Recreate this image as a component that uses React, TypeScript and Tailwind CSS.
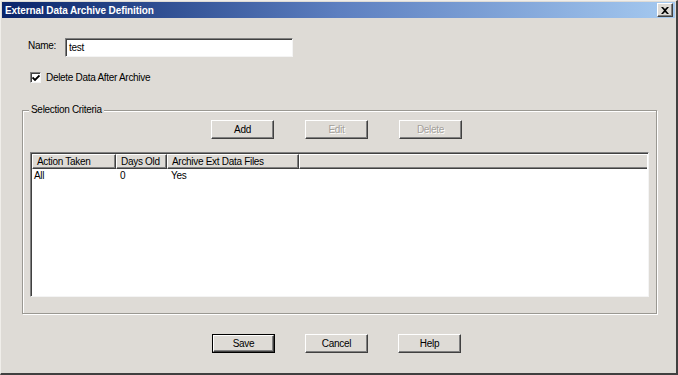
import React from 'react';

const font = "font-['Liberation_Sans',Arial,sans-serif]";

interface BtnProps {
  label: string;
  disabled?: boolean;
  isDefault?: boolean;
}

const Btn: React.FC<BtnProps> = ({ label, disabled, isDefault }) => {
  if (isDefault) {
    return (
      <div className="w-[63px] h-[19px] border border-black">
        <div className="w-full h-full flex items-center justify-center border-t border-l border-white border-r border-b border-r-[#404040] border-b-[#404040] shadow-[inset_-1px_-1px_0_#808080] text-[10px] tracking-[-0.3px] text-black">
          {label}
        </div>
      </div>
    );
  }
  return (
    <div
      className={`w-[63px] h-[19px] flex items-center justify-center border-t border-l border-white border-r border-b border-r-[#404040] border-b-[#404040] shadow-[inset_-1px_-1px_0_#808080] text-[10px] tracking-[-0.3px] ${
        disabled ? 'text-[#a3a09a] [text-shadow:1px_1px_0_#fff]' : 'text-black'
      }`}
    >
      {label}
    </div>
  );
};

const HeaderCell: React.FC<{ label: string; width: string }> = ({ label, width }) => (
  <div
    className={`${width} h-full flex items-center pl-[4px] border-t border-l border-white border-r border-b border-r-[#404040] border-b-[#404040] shadow-[inset_-1px_-1px_0_#808080]`}
  >
    {label}
  </div>
);

const App: React.FC = () => {
  return (
    <div className={`${font} w-[678px] h-[375px] bg-[#dedbd6] border-l border-t border-l-[#f0eeea] border-t-[#f0eeea] border-r-2 border-b-2 border-r-[#404040] border-b-[#404040] flex flex-col text-black`}>
      {/* title bar */}
      <div className="mx-[1px] mt-[1px] h-[16px] flex items-center justify-between bg-gradient-to-r from-[#0a246a] via-[#5d7fc0] to-[#a6caf0] pl-[3px] pr-[2px]">
        <span className="text-[10px] font-bold text-white tracking-[-0.1px]">External Data Archive Definition</span>
        <div className="w-[16px] h-[14px] bg-[#dedbd6] flex items-center justify-center border-t border-l border-white border-r border-b border-r-[#404040] border-b-[#404040] shadow-[inset_-1px_-1px_0_#808080]">
          <svg width="8" height="7" viewBox="0 0 8 7">
            <path d="M0 0h2l2 2 2-2h2L5 3.5 8 7H6L4 5 2 7H0l3-3.5z" fill="#000" />
          </svg>
        </div>
      </div>

      {/* name */}
      <div className="mt-[20px] h-[19px] flex items-center pl-[27px]">
        <span className="text-[10px] tracking-[-0.3px] w-[37px] -mt-[4px]">Name:</span>
        <div className="w-[228px] h-[19px] bg-white border-t border-l border-[#808080] border-r border-b border-r-[#f4f4f4] border-b-[#f4f4f4] shadow-[inset_1px_1px_0_#404040] flex items-center pl-[3px] text-[10px] tracking-[-0.3px]">
          test
        </div>
      </div>

      {/* checkbox */}
      <div className="mt-[15px] h-[11px] flex items-center pl-[29px]">
        <div className="w-[11px] h-[11px] bg-white border-t border-l border-[#808080] border-r border-b border-r-[#f4f4f4] border-b-[#f4f4f4] shadow-[inset_1px_1px_0_#404040] flex items-center justify-center">
          <svg width="8" height="8" viewBox="0 0 8 8">
            <path d="M0.5 3.5l2.5 2.5L7.5 1.5" fill="none" stroke="#000" strokeWidth="1.8" />
          </svg>
        </div>
        <span className="ml-[5px] text-[10px] tracking-[-0.3px]">Delete Data After Archive</span>
      </div>

      {/* group box */}
      <div className="relative mt-[27px] ml-[21px] w-[635px] h-[204px] border border-[#9a9892] shadow-[inset_1px_1px_0_#fff,1px_1px_0_#fff] flex flex-col">
        <span className="absolute -top-[7px] left-[6px] px-[2px] bg-[#dedbd6] text-[10px] tracking-[-0.3px] leading-[12px]">
          Selection Criteria
        </span>

        <div className="mt-[9px] flex pl-[188px] gap-[31px]">
          <Btn label="Add" />
          <Btn label="Edit" disabled />
          <Btn label="Delete" disabled />
        </div>

        {/* list */}
        <div className="mt-[13px] mx-[7px] h-[145px] bg-white border-t border-l border-[#808080] border-r border-b border-r-[#f4f4f4] border-b-[#f4f4f4] shadow-[inset_1px_1px_0_#404040] p-[1px] flex flex-col text-[10px] tracking-[-0.3px]">
          <div className="h-[15px] flex bg-[#dedbd6]">
            <HeaderCell label="Action Taken" width="w-[84px]" />
            <HeaderCell label="Days Old" width="w-[51px]" />
            <HeaderCell label="Archive Ext Data Files" width="w-[132px]" />
            <div className="flex-1 h-full border-t border-l border-white border-b border-b-[#404040] shadow-[inset_0_-1px_0_#808080]" />
          </div>
          <div className="h-[13px] flex items-center">
            <span className="w-[84px] pl-[2px]">All</span>
            <span className="w-[51px] pl-[4px]">0</span>
            <span className="pl-[4px]">Yes</span>
          </div>
        </div>
      </div>

      {/* bottom buttons */}
      <div className="mt-[20px] flex pl-[211px] gap-[30px]">
        <Btn label="Save" isDefault />
        <Btn label="Cancel" />
        <Btn label="Help" />
      </div>
    </div>
  );
};

export default App;
